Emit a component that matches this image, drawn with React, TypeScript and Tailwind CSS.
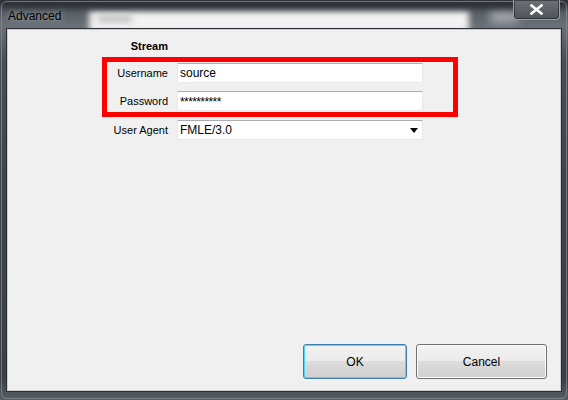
import React from 'react';

const font = { fontFamily: '"Liberation Sans", Arial, sans-serif' };

function TextBox({ value, password }: { value: string; password?: boolean }) {
  return (
    <div className="w-[246px] h-[20px] bg-white border border-[#e3e9ef] border-t-[#abadb3] flex items-center px-[2px] text-[12px] text-black">
      {password ? <span className="tracking-[-0.6px] text-[12px] leading-none mt-[2px]">**********</span> : value}
    </div>
  );
}

function Row({ label, children, className }: { label: string; children: React.ReactNode; className?: string }) {
  return (
    <div className={`flex items-center h-[20px] ${className ?? ''}`}>
      <div className="w-[81px] text-right text-[11px] text-black">{label}</div>
      <div className="ml-[9px]">{children}</div>
    </div>
  );
}

function Btn({ label, focused, w }: { label: string; focused?: boolean; w: string }) {
  return (
    <div
      className={`${w} h-[35px] rounded-[3px] border flex items-center justify-center text-[12px] text-black bg-[linear-gradient(#f2f2f2_0%,#ebebeb_48%,#dddddd_50%,#cfcfcf_100%)] ${
        focused ? 'border-[#3c7fb1] shadow-[inset_0_0_0_1px_#48d8fb]' : 'border-[#707070] shadow-[inset_0_0_0_1px_#fcfcfc]'
      }`}
    >
      {label}
    </div>
  );
}

export default function App() {
  return (
    <div
      style={font}
      className="relative w-[568px] h-[400px] overflow-hidden bg-[linear-gradient(180deg,#33373c_0px,#555a61_9px,#6a7077_26px,#4a4f56_60px,#3e4349_200px,#3c4046_380px,#5a5f66_400px)] flex flex-col"
    >
      {/* glass: blurred background seen through title bar */}
      <div className="absolute left-[89px] top-[11px] w-[380px] h-[22px] bg-[#f2f2f2] blur-[3px] rounded-[2px]" />
      <div className="absolute left-[98px] top-[16px] w-[34px] h-[6px] bg-[#bcbcbc] blur-[3px]" />
      <div className="absolute left-[490px] top-[11px] w-[28px] h-[12px] bg-[#a4a9ae] blur-[5px]" />
      <div className="absolute left-0 top-0 w-[568px] h-[8px] bg-[#2a2e33] blur-[3px]" />
      <div className="absolute left-[1px] top-[1px] w-[566px] h-[398px] rounded-[6px] border border-[#8c9196] opacity-70" />

      {/* title bar */}
      <div className="relative h-[29px] flex items-start">
        <span className="ml-[8px] mt-[7px] text-[12px] text-black [text-shadow:0_0_6px_rgba(255,255,255,0.6)]">Advanced</span>
        <div className="ml-auto mr-[8px] w-[47px] h-[20px] rounded-b-[4px] border border-t-0 border-[#9aa0a6] bg-[linear-gradient(#6c7178,#4f545a)] flex items-center justify-center shadow-[inset_0_0_0_1px_rgba(0,0,0,0.4)]">
          <svg width="13" height="11" viewBox="0 0 13 11">
            <path d="M1.5 1.5 L11.5 9.5 M11.5 1.5 L1.5 9.5" stroke="#ffffff" strokeWidth="2.6" strokeLinecap="square" />
          </svg>
        </div>
      </div>

      {/* client area */}
      <div className="relative mx-[7px] h-[362px] bg-[#f0f0f0] border border-[#c9cdd1] outline outline-1 outline-[#2b2f34] flex flex-col">
        <div className="pl-[79px] pt-[9px]">
          <div className="flex items-center h-[14px]">
            <div className="w-[81px] text-right text-[11px] font-bold text-black">Stream</div>
          </div>
          <Row label="Username" className="mt-[10px]">
            <TextBox value="source" />
          </Row>
          <Row label="Password" className="mt-[8px]">
            <TextBox value="" password />
          </Row>
          <Row label="User Agent" className="mt-[9px]">
            <div className="w-[246px] h-[20px] bg-white border border-[#e3e9ef] border-t-[#abadb3] flex items-center px-[2px] text-[12px] text-black">
              <span>FMLE/3.0</span>
              <svg className="ml-auto mr-[2px]" width="8" height="5" viewBox="0 0 8 5">
                <path d="M0 0 H8 L4 5 Z" fill="#000" />
              </svg>
            </div>
          </Row>
        </div>

        <div className="mt-auto mb-[11px] mr-[13px] flex justify-end gap-[9px]">
          <Btn label="OK" focused w="w-[104px]" />
          <Btn label="Cancel" w="w-[131px]" />
        </div>
      </div>

      {/* annotation box */}
      <div className="absolute left-[102px] top-[57px] w-[356px] h-[60px] border-[5px] border-[#ff0000]" />
    </div>
  );
}
